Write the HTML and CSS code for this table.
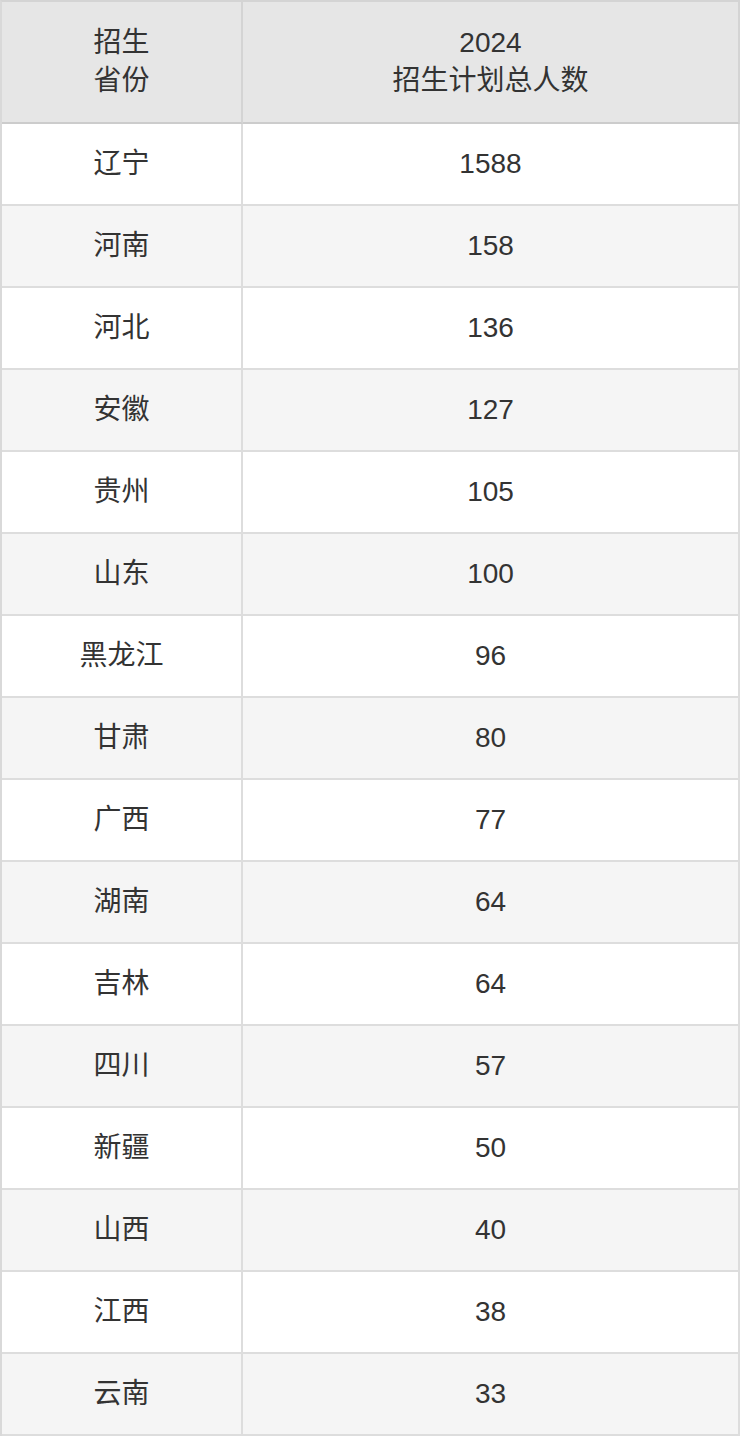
FILE: index.html
```html
<!DOCTYPE html>
<html lang="zh">
<head>
<meta charset="utf-8">
<link rel="stylesheet" href="styles.css">
</head>
<body>
<table class="plan">
  <thead>
    <tr><th class="c1">招生<br>省份</th><th class="c2">2024<br>招生计划总人数</th></tr>
  </thead>
  <tbody>
    <tr><td>辽宁</td><td>1588</td></tr>
    <tr><td>河南</td><td>158</td></tr>
    <tr><td>河北</td><td>136</td></tr>
    <tr><td>安徽</td><td>127</td></tr>
    <tr><td>贵州</td><td>105</td></tr>
    <tr><td>山东</td><td>100</td></tr>
    <tr><td>黑龙江</td><td>96</td></tr>
    <tr><td>甘肃</td><td>80</td></tr>
    <tr><td>广西</td><td>77</td></tr>
    <tr><td>湖南</td><td>64</td></tr>
    <tr><td>吉林</td><td>64</td></tr>
    <tr><td>四川</td><td>57</td></tr>
    <tr><td>新疆</td><td>50</td></tr>
    <tr><td>山西</td><td>40</td></tr>
    <tr><td>江西</td><td>38</td></tr>
    <tr><td>云南</td><td>33</td></tr>
  </tbody>
</table>
</body>
</html>
```
FILE: styles.css
```css
html, body {
  margin: 0;
  padding: 0;
  background: #ffffff;
}
body {
  font-family: "Liberation Sans", "Noto Sans CJK SC", sans-serif;
  color: #333333;
}
.plan {
  width: 740px;
  border-collapse: separate;
  border-spacing: 0;
  table-layout: fixed;
  border-top: 2px solid #d4d4d4;
  border-left: 2px solid #d9d9d9;
}
.plan th, .plan td {
  box-sizing: border-box;
  border-right: 2px solid #dddddd;
  border-bottom: 2px solid #dddddd;
  padding: 0;
  text-align: center;
  vertical-align: middle;
  font-size: 28px;
  font-weight: normal;
}
.plan th {
  height: 122px;
  line-height: 38px;
  background: #e6e6e6;
  border-bottom-color: #cccccc;
  border-right-color: #d4d4d4;
}
.plan .c1 { width: 241px; }
.plan td {
  height: 82px;
  line-height: 32px;
}
.plan tbody tr:nth-child(odd) td { background: #ffffff; }
.plan tbody tr:nth-child(even) td { background: #f5f5f5; }
```
